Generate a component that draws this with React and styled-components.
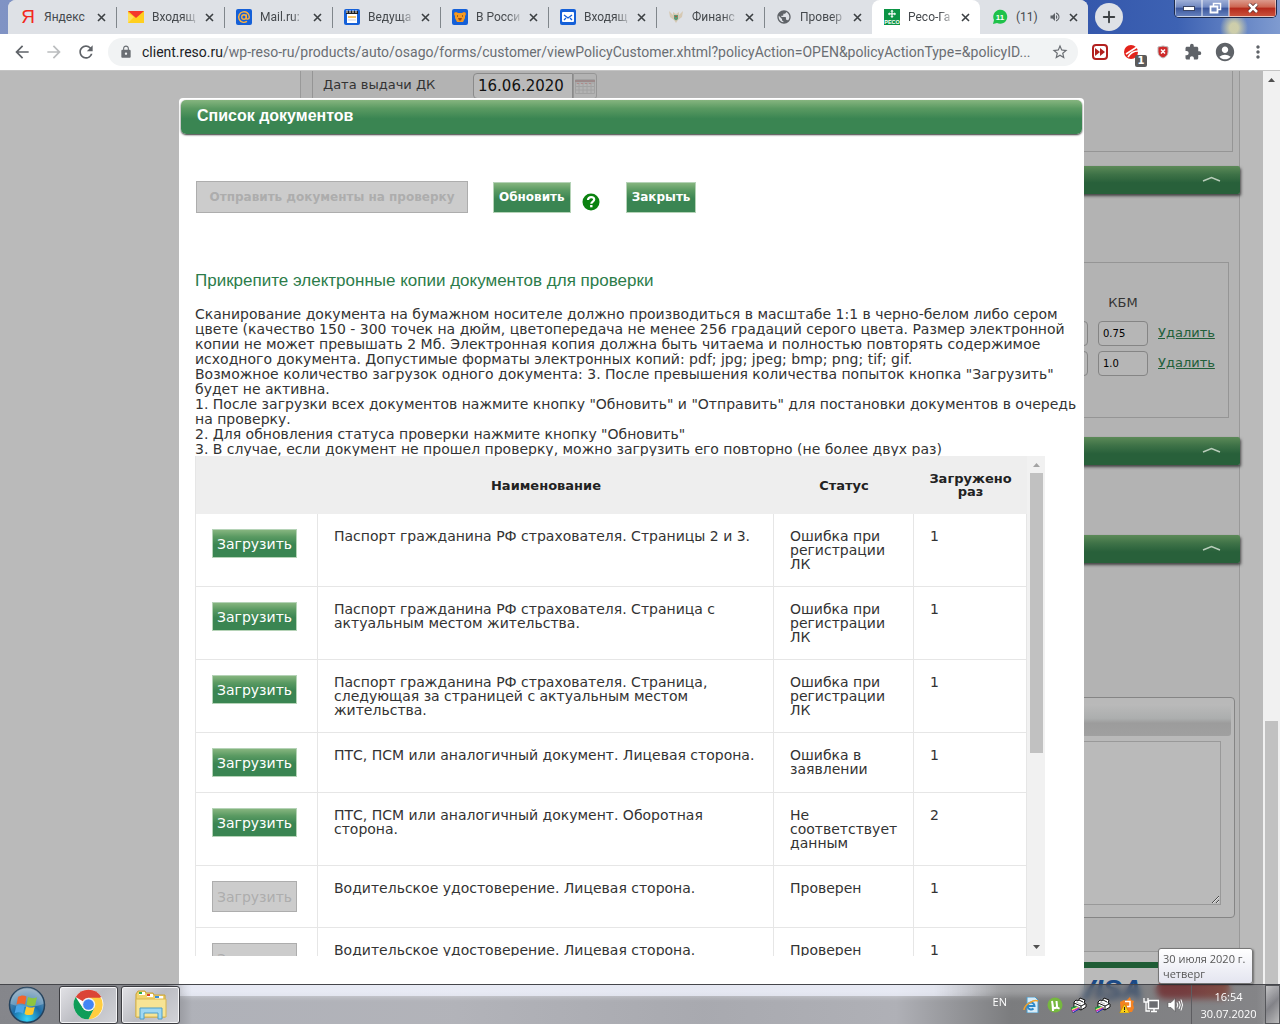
import React from 'react';
import styled, { createGlobalStyle, css } from 'styled-components';
import { FiPlus } from 'react-icons/fi';
import { MdArrowBack, MdArrowForward, MdRefresh, MdLock, MdStarBorder, MdExtension, MdAccountCircle, MdMoreVert, MdVolumeUp, MdPublic } from 'react-icons/md';

const GlobalStyle = createGlobalStyle`
  * {
    box-sizing: border-box;
  }

  body {
    margin: 0;
    overflow: hidden;
    font-family: 'DejaVu Sans', Verdana, sans-serif;
    font-size: 14px;
    color: #333;
  }

  button, input, textarea {
    font-family: inherit;
  }
`;

const chromeFont = css`
  font-family: Roboto, 'Open Sans', sans-serif;
`;

const greenFill = css`
  background: linear-gradient(to bottom, #86b57f 0%, #5a9a62 25%, #3a8552 55%, #3a8552 100%);
`;

const Screen = styled.div`
  display: grid;
  grid-template-rows: 34px 37px minmax(0, 1fr) 40px;
  grid-template-columns: minmax(0, 1fr);
  height: 100vh;
`;

/* ---------- browser ---------- */

const TabStrip = styled.div`
  ${chromeFont}
  display: flex;
  padding-left: 8px;
  background:
    radial-gradient(ellipse 14px 16px at 1234px 28px, rgba(217, 214, 168, 0.9) 30%, rgba(217, 214, 168, 0) 100%),
    linear-gradient(to right, #8093c4 0%, #5a75ba 50%, #3558ac 85%, #3d62b3 92%, #7f9bd0 100%);
`;

const Tabs = styled.div`
  display: flex;
  flex: 0 1 1080px;
  min-width: 0;
  background: #dee1e6;
  border-radius: 8px 8px 0 0;
`;

const Tab = styled.div`
  display: flex;
  align-items: center;
  flex: 0 1 108px;
  gap: 8px;
  min-width: 0;
  padding: 0 10px 0 11px;
  font-size: 12px;
  color: #45494d;
  background: ${props => (props.$active ? '#fff' : '#dee1e6')};
  border-left: 1px solid transparent;
  border-image: ${props => (props.$divider ? 'linear-gradient(transparent 8px, #80868b 8px, #80868b 27px, transparent 27px) 1' : 'none')};
  border-radius: ${props => (props.$divider ? '0' : '8px 8px 0 0')};
`;

const TabTitle = styled.span`
  flex: 1;
  min-width: 0;
  white-space: nowrap;
  mask-image: ${props => (props.$faded ? 'linear-gradient(to right, #000 70%, rgba(0, 0, 0, 0.15) 100%)' : 'none')};
`;

const Favicon = styled.svg`
  flex: none;
  width: 16px;
  height: 16px;
`;

const YandexLetter = styled.span`
  width: 16px;
  flex: none;
  text-align: center;
  font: 19px/16px 'Liberation Sans Narrow', 'Liberation Sans', sans-serif;
  color: #f2281c;
`;

const PlainButton = styled.button`
  display: flex;
  align-items: center;
  justify-content: center;
  flex: none;
  padding: 0;
  border: none;
  background: none;
  color: ${props => props.$color || '#5f6368'};
`;

const NewTab = styled(PlainButton)`
  width: 28px;
  height: 28px;
  margin: 3px 0 0 7px;
  border-radius: 50%;
  background: #dee1e6;
  color: #3c4043;
`;

const WindowButtons = styled.div`
  display: flex;
  align-self: flex-start;
  height: 18px;
  margin-left: auto;
  margin-right: 3px;
  border: 1px solid #1d2a4b;
  border-top: none;
  border-radius: 0 0 5px 5px;
  overflow: hidden;
`;

const WindowButton = styled.button`
  display: flex;
  align-items: center;
  justify-content: center;
  width: ${props => (props.$close ? '47px' : '27px')};
  padding: 0;
  border: 1px solid rgba(255, 255, 255, 0.45);
  border-top: none;
  background: ${props => (props.$close
    ? 'linear-gradient(to bottom, #dc9a8c 0%, #cc6450 45%, #b4291b 50%, #c9503a 100%)'
    : 'linear-gradient(to bottom, #9fb0d8 0%, #6f87c0 45%, #3a559b 50%, #6480bd 100%)')};
`;

const Toolbar = styled.div`
  display: flex;
  align-items: center;
  padding: 0 12px;
  background: #fff;
  border-bottom: 1px solid #c4c4c4;
`;

const NavButtons = styled.div`
  display: flex;
  gap: 12px;
  margin-right: 12px;
`;

const Omnibox = styled.div`
  ${chromeFont}
  display: flex;
  align-items: center;
  flex: 1;
  min-width: 0;
  gap: 9px;
  height: 28px;
  padding: 0 9px 0 11px;
  border-radius: 14px;
  background: #f1f3f4;
  font-size: 14px;
  color: #6a6e73;
`;

const Address = styled.span`
  flex: 1;
  min-width: 0;
  overflow: hidden;
  white-space: nowrap;

  b {
    font-weight: 400;
    color: #202124;
  }
`;

const Extensions = styled.div`
  display: flex;
  align-items: center;
  gap: 12px;
  margin-left: 12px;
`;

const BlockerButton = styled(PlainButton)`
  position: relative;

  span {
    position: absolute;
    right: -5px;
    bottom: -5px;
    width: 12px;
    height: 12px;
    border-radius: 2px;
    background: #5b5b5b;
    color: #fff;
    font: bold 10px/12px 'DejaVu Sans', sans-serif;
  }
`;

/* ---------- page under the dialog ---------- */

const Viewport = styled.div`
  position: relative;
  grid-row: 3 / 5;
  grid-column: 1;
  display: flex;
  min-height: 0;
  overflow: hidden;
  background: #bababa;
`;

const Page = styled.main`
  flex: 1;
  display: flex;
  flex-direction: column;
  min-width: 0;
  padding: 0 23px 0 300px;
`;

const Sheet = styled.div`
  padding-bottom: 33px;
  background: #b3b3b3;
  border: 1px solid #999;
  border-top: none;
`;

const OwnerPanel = styled.section`
  display: flex;
  align-items: flex-start;
  height: 81px;
  margin: 0 6px 14px 11px;
  padding: 2px 10px;
  border: 1px solid #959595;
  border-top: none;
  font-size: 13px;

  label {
    width: 150px;
    line-height: 24px;
  }
`;

const DateInput = styled.input`
  width: 100px;
  height: 26px;
  padding: 0 4px;
  border: 1px solid #8a8a8a;
  border-radius: 4px 0 0 4px;
  background: #bababa;
  font-size: 15px;
  color: #111;
`;

const CalendarButton = styled(PlainButton)`
  width: 24px;
  height: 26px;
  border: 1px solid #969696;
  border-radius: 0 3px 3px 0;
`;

const SectionBar = styled.button`
  display: flex;
  justify-content: flex-end;
  align-items: center;
  width: calc(100% + 2px);
  height: 28px;
  margin: 0 -1px ${props => props.$gap};
  padding: 0 19px 2px;
  border: none;
  border-radius: 2px;
  background: linear-gradient(to bottom, #5c8a58 0%, #3e7247 30%, #28603a 60%, #28603a 100%);
  box-shadow: 1px 2px 3px #444;
`;

const DriversPanel = styled.section`
  display: grid;
  grid-template-columns: 50px 50px 54px;
  grid-auto-rows: 24px;
  justify-content: end;
  align-content: start;
  gap: 6px 10px;
  height: 156px;
  margin: 68px 10px 19px 11px;
  padding: 28px 16px 0;
  border: 1px solid #959595;
  font-size: 13px;
  line-height: 24px;
`;

const ColumnName = styled.span`
  grid-column: 2;
  text-align: center;
`;

const SmallInput = styled.input`
  min-width: 0;
  height: 25px;
  padding: 0 4px;
  border: 1px solid #858585;
  border-radius: 4px;
  background: #b6b6b6;
  font-size: 10px;
  color: #000;
`;

const PageLink = styled.a`
  color: #22603a;
`;

const NotePanel = styled.section`
  height: 221px;
  margin: 0 4px 0 11px;
  padding: 6px 3px;
  border: 1px solid #858585;
  border-radius: 4px;
  background: #b9b9b9;
`;

const NoteTitle = styled.div`
  height: 32px;
  margin-bottom: 5px;
  border-radius: 3px;
  background: linear-gradient(to bottom, #bababa 0%, #acaeae 45%, #9c9c9c 60%, #a0a0a0 100%);
`;

const NoteArea = styled.textarea`
  display: block;
  width: calc(100% - 10px);
  height: 164px;
  border: 1px solid #999;
  background: #bababa;
`;

const PageFooter = styled.footer`
  display: flex;
  justify-content: flex-end;
  gap: 14px;
  margin-top: 10px;
  padding: 8px 10px 0;
  border-top: 6px solid #1f5c35;
  font: italic bold 28px/28px 'Liberation Sans', sans-serif;
  color: #1b4a86;
`;

const CardMark = styled.span`
  width: 74px;
  height: 18px;
  margin-top: 5px;
  border-radius: 9px;
  background: linear-gradient(to right, #a03030 40%, #b5543a);
`;

const ScrollTrack = styled.div`
  display: flex;
  flex: none;
  flex-direction: column;
  align-items: center;
  width: ${props => props.$width};
  background: #f1f1f1;
`;

const ScrollArrow = styled.svg`
  flex: none;
  width: 9px;
  height: 17px;
  transform: ${props => (props.$down ? 'rotate(180deg)' : 'none')};
`;

const ScrollThumb = styled.div`
  width: 13px;
  height: ${props => props.$height};
  margin-top: ${props => props.$top || 0};
  margin-bottom: auto;
  background: #c1c1c1;
`;

/* ---------- dialog ---------- */

const Overlay = styled.div`
  position: absolute;
  inset: 0 17px 28px 0;
  display: flex;
  justify-content: center;
  padding-top: 27px;
`;

const Dialog = styled.div`
  display: flex;
  flex-direction: column;
  width: 905px;
  max-width: 100%;
  padding: 2px;
  border-radius: 4px 4px 0 0;
  background: #fff;
`;

const DialogTitle = styled.h1`
  ${greenFill}
  flex: none;
  height: 34px;
  margin: 0;
  padding-left: 16px;
  border-radius: 5px;
  box-shadow: 0 1px 2px #333;
  font: bold 16px/32px 'Liberation Sans', Arial, sans-serif;
  color: #fff;
`;

const DialogBody = styled.div`
  padding: 47px 0 0 14px;
`;

const Actions = styled.div`
  display: flex;
  align-items: center;
  padding-left: 1px;
`;

const ActionButton = styled.button`
  ${greenFill}
  flex: none;
  height: 31px;
  padding: 0 5px;
  border: 1px solid #b5d3b7;
  font-size: 12px;
  font-weight: bold;
  color: #fff;

  &:disabled {
    height: 32px;
    border-color: #adadad;
    background: #ccc;
    color: #adadad;
  }
`;

const SendButton = styled(ActionButton)`
  width: 272px;
  margin-right: 25px;
`;

const HelpButton = styled(PlainButton)`
  margin: 9px 26px 0 11px;
`;

const Subtitle = styled.h2`
  margin: 58px 0 16px;
  font: 17px/20px 'Liberation Sans', Arial, sans-serif;
  color: #2c7c4a;
`;

const Rules = styled.div`
  height: 149px;
  overflow: hidden;
  line-height: 15px;

  p {
    margin: 0;
  }
`;

const TableFrame = styled.div`
  display: flex;
  width: 850px;
  max-width: 100%;
  height: 500px;
  overflow: hidden;
`;

const TableScroll = styled.div`
  flex: 1;
  min-width: 0;
  overflow: hidden;
`;

const Table = styled.table`
  width: 100%;
  table-layout: fixed;
  border-spacing: 0;
  border-left: 1px solid #e6e6e6;
  line-height: 14px;

  th {
    height: 58px;
    padding: 0 15px;
    background: #eee;
    font-size: 13px;
    line-height: 13px;
    color: #222;
  }

  td {
    padding: 15px 15px 15px 16px;
    border-right: 1px solid #e6e6e6;
    border-bottom: 1px solid #e6e6e6;
    vertical-align: top;
  }
`;

const UploadButton = styled(ActionButton)`
  display: block;
  height: 29px;
  padding: 0 4px;
  font-size: 14px;
  font-weight: normal;

  &:disabled {
    height: 31px;
  }
`;

/* ---------- taskbar ---------- */

const Taskbar = styled.footer`
  font-family: 'Open Sans', 'Noto Sans', sans-serif;
  grid-row: 4;
  grid-column: 1;
  z-index: 2;
  display: flex;
  align-items: center;
  min-width: 0;
  border-top: 1px solid #45464b;
  color: #fff;
  font-size: 11px;
  backdrop-filter: blur(3px);
  background:
    linear-gradient(to right, transparent 13%, rgba(240, 243, 255, 0.7) 15%, rgba(240, 243, 255, 0.7) 73%, transparent 78%) 0 0 / 100% 11px no-repeat,
    linear-gradient(to right, rgba(80, 82, 92, 0.5) 0%, rgba(80, 82, 92, 0.5) 13%, rgba(164, 168, 182, 0.5) 15%, rgba(170, 172, 184, 0.5) 35%, rgba(150, 152, 164, 0.5) 55%, rgba(164, 166, 178, 0.5) 70%, rgba(60, 62, 66, 0.5) 79%, rgba(80, 80, 86, 0.5) 100%);
`;

const StartButton = styled(PlainButton)`
  width: 59px;
  padding-right: 6px;
`;

const TaskButton = styled(PlainButton)`
  width: 59px;
  height: 38px;
  margin-right: 3px;
  border: 1px solid #3c3d42;
  border-radius: 3px;
  background: linear-gradient(135deg, #e2e2e6 0%, #bcbdc3 50%, #d2d3d8 100%);
  box-shadow: inset 0 0 0 1px #f4f4f6;
`;

const Tray = styled.div`
  display: flex;
  align-items: center;
  gap: 8px;
  height: 100%;
  margin-left: auto;
`;

const Language = styled.span`
  margin: -6px 8px 0 0;
`;

const Clock = styled.time`
  position: relative;
  width: 74px;
  height: 100%;
  padding-top: 3px;
  border-left: 1px solid #5d5d61;
  text-align: center;
  line-height: 17px;
`;

const ClockTip = styled.span`
  position: absolute;
  right: 12px;
  bottom: 40px;
  width: 95px;
  padding: 2px 4px;
  border: 1px solid #767676;
  border-radius: 3px;
  background: linear-gradient(to bottom, #fff, #e4e5f0);
  box-shadow: 1px 1px 2px rgba(0, 0, 0, 0.4);
  color: #575757;
  text-align: left;
  line-height: 15px;
  white-space: nowrap;
`;

const ShowDesktop = styled.button`
  width: 15px;
  height: 100%;
  padding: 0;
  border: 1px solid #55565a;
  background: linear-gradient(135deg, rgba(255, 255, 255, 0.5), rgba(120, 120, 130, 0.4) 50%, rgba(255, 255, 255, 0.4));
`;

const CloseIcon = () => (
  <svg width="9" height="9" viewBox="0 0 9 9">
    <path d="M1 1l7 7M8 1l-7 7" stroke="#3c4043" strokeWidth="1.6" />
  </svg>
);

const Chevron = () => (
  <svg width="19" height="6" viewBox="0 0 19 6">
    <path d="M1 5L9.500 1.500L18 5" fill="none" stroke="#b9cdbb" strokeWidth="1.5" />
  </svg>
);

const favicons = {
  yandex: <YandexLetter>Я</YandexLetter>,
  inbox: (
    <Favicon viewBox="0 0 16 16">
      <rect y="2" width="16" height="12" fill="#ffcf1f" />
      <path d="M0 2h16l-8 7z" fill="#f4382c" />
      <path d="M0 14V4l6 4z" fill="#ffe05c" />
    </Favicon>
  ),
  mail: (
    <Favicon viewBox="0 0 16 16">
      <rect width="16" height="16" rx="2" fill="#1560d8" />
      <circle cx="8" cy="8" r="2.300" fill="none" stroke="#ffb13b" strokeWidth="1.400" />
      <path d="M10.300 5.500v3.400c0 1.800 3 1.800 3-.9A5.300 5.300 0 1 0 11 12.400" fill="none" stroke="#ffb13b" strokeWidth="1.400" />
    </Favicon>
  ),
  calendar: (
    <Favicon viewBox="0 0 16 16">
      <rect width="16" height="16" rx="2" fill="#1560d8" />
      <path d="M3 5h10v9H3z" fill="#fff" />
      <path d="M2 2h12v3H2z" fill="#222" />
      <path d="M3 1v3M6 1v3M9 1v3M12 1v3" stroke="#eee" />
      <path d="M4 8h8" stroke="#f3b23a" strokeWidth="1.500" />
      <path d="M4 11h8" stroke="#c9d3e6" />
    </Favicon>
  ),
  bear: (
    <Favicon viewBox="0 0 16 16">
      <rect width="16" height="16" rx="2" fill="#1560d8" />
      <circle cx="4" cy="5" r="2" fill="#f08c1c" />
      <circle cx="12" cy="5" r="2" fill="#f08c1c" />
      <path d="M3 4h10v5l-2 4H5L3 9z" fill="#f59a23" />
      <path d="M6 9h4l-1 2.500H7z" fill="#a14b12" />
      <path d="M5 7h1M10 7h1" stroke="#5a2a0a" />
    </Favicon>
  ),
  envelope: (
    <Favicon viewBox="0 0 16 16">
      <rect width="16" height="16" rx="2" fill="#1560d8" />
      <rect x="2" y="3" width="12" height="10" rx="1" fill="#fff" />
      <path d="M4 6l4 3 4-3M4 11l2-2M12 11l-2-2" fill="none" stroke="#1560d8" strokeWidth="1.300" />
    </Favicon>
  ),
  eagle: (
    <Favicon viewBox="0 0 16 16">
      <path d="M1 2l4 4V3l3 2 3-2v3l4-4-1 6-4 3-2 3-2-3-4-3z" fill="#d6c9b4" />
      <path d="M6 6h4v4l-2 1.500L6 10z" fill="#5c9a76" />
      <path d="M7 7.500h2" stroke="#b9503c" />
    </Favicon>
  ),
  globe: <MdPublic size={16} color="#5f6368" />,
  reso: (
    <Favicon viewBox="0 0 16 16">
      <rect width="16" height="16" fill="#0b9444" />
      <path d="M8 .8l1.700 1.700H6.300zM8 9L6.300 7.300h3.400zM3.900 4.900l1.700-1.700v3.400zM12.100 4.900l-1.700-1.700v3.400z" fill="#fff" />
      <path d="M8 2v6M5 4.900h6" stroke="#fff" strokeWidth="1.200" />
      <text x="8" y="15" textAnchor="middle" fontFamily="Liberation Sans" fontWeight="bold" fontSize="5.500" fill="#fff">РЕСО</text>
    </Favicon>
  ),
  whatsapp: (
    <Favicon viewBox="0 0 16 16">
      <path d="M1 15l1-4a7 7 0 1 1 3 3z" fill="#1fc24a" />
      <text x="8" y="11" textAnchor="middle" fontFamily="Liberation Sans" fontWeight="bold" fontSize="8" fill="#fff">11</text>
    </Favicon>
  ),
};

const tabs = [
  { icon: 'yandex', title: 'Яндекс' },
  { icon: 'inbox', title: 'Входящ', divider: true, faded: true },
  { icon: 'mail', title: 'Mail.ru:', divider: true, faded: true },
  { icon: 'calendar', title: 'Ведуща', divider: true, faded: true },
  { icon: 'bear', title: 'В Росси', divider: true, faded: true },
  { icon: 'envelope', title: 'Входящ', divider: true, faded: true },
  { icon: 'eagle', title: 'Финанс', divider: true, faded: true },
  { icon: 'globe', title: 'Провер', divider: true, faded: true },
  { icon: 'reso', title: 'Ресо-Га', active: true, faded: true },
  { icon: 'whatsapp', title: '(11)', sound: true },
];

const documents = [
  { name: 'Паспорт гражданина РФ страхователя. Страницы 2 и 3.', status: 'Ошибка при регистрации ЛК', count: 1 },
  { name: 'Паспорт гражданина РФ страхователя. Страница с актуальным местом жительства.', status: 'Ошибка при регистрации ЛК', count: 1 },
  { name: 'Паспорт гражданина РФ страхователя. Страница, следующая за страницей с актуальным местом жительства.', status: 'Ошибка при регистрации ЛК', count: 1 },
  { name: 'ПТС, ПСМ или аналогичный документ. Лицевая сторона.', status: 'Ошибка в заявлении', count: 1 },
  { name: 'ПТС, ПСМ или аналогичный документ. Оборотная сторона.', status: 'Не соответствует данным', count: 2 },
  { name: 'Водительское удостоверение. Лицевая сторона.', status: 'Проверен', count: 1, done: true },
  { name: 'Водительское удостоверение. Лицевая сторона.', status: 'Проверен', count: 1, done: true },
];

const Browser = () => (
  <>
    <TabStrip>
      <Tabs>
        {tabs.map((tab, i) => (
          <Tab key={i} $active={tab.active} $divider={tab.divider}>
            {favicons[tab.icon]}
            <TabTitle $faded={tab.faded}>{tab.title}</TabTitle>
            {tab.sound && <MdVolumeUp size={12} color="#5f6368" />}
            <PlainButton aria-label="Закрыть вкладку"><CloseIcon /></PlainButton>
          </Tab>
        ))}
      </Tabs>
      <NewTab aria-label="Новая вкладка"><FiPlus size={18} strokeWidth={2.5} /></NewTab>
      <WindowButtons>
        <WindowButton aria-label="Свернуть">
          <svg width="12" height="5"><rect x="0.500" y="0.500" width="11" height="4" fill="#fff" stroke="#3b4666" /></svg>
        </WindowButton>
        <WindowButton aria-label="Восстановить">
          <svg width="13" height="12" viewBox="0 0 13 12">
            <path d="M4.500 1.500h7v6h-7z" fill="none" stroke="#fff" strokeWidth="1.500" />
            <path d="M1.500 4.500h7v6h-7z" fill="#7088bf" stroke="#fff" strokeWidth="1.800" />
          </svg>
        </WindowButton>
        <WindowButton $close aria-label="Закрыть">
          <svg width="12" height="10" viewBox="0 0 12 10">
            <path d="M2 1l8 8M10 1l-8 8" stroke="#5a2a2a" strokeWidth="4" />
            <path d="M2 1l8 8M10 1l-8 8" stroke="#fff" strokeWidth="2.500" />
          </svg>
        </WindowButton>
      </WindowButtons>
    </TabStrip>
    <Toolbar>
      <NavButtons>
        <PlainButton aria-label="Назад"><MdArrowBack size={20} /></PlainButton>
        <PlainButton aria-label="Вперёд" $color="#bbbdbf"><MdArrowForward size={20} /></PlainButton>
        <PlainButton aria-label="Обновить страницу"><MdRefresh size={20} /></PlainButton>
      </NavButtons>
      <Omnibox>
        <MdLock size={14} />
        <Address>
          <b>client.reso.ru</b>/wp-reso-ru/products/auto/osago/forms/customer/viewPolicyCustomer.xhtml?policyAction=OPEN&amp;policyActionType=&amp;policyID...
        </Address>
        <MdStarBorder size={18} />
      </Omnibox>
      <Extensions>
        <PlainButton aria-label="Перемотка">
          <svg width="20" height="20" viewBox="0 0 20 20">
            <rect x="3" y="3" width="14" height="14" rx="3" fill="#fff" stroke="#b3211f" strokeWidth="2" />
            <path d="M5 6l5 4-5 4zM10 6l5 4-5 4z" fill="#b3211f" />
          </svg>
        </PlainButton>
        <BlockerButton aria-label="Блокировщик">
          <svg width="20" height="20" viewBox="0 0 20 20">
            <circle cx="9" cy="10" r="7" fill="#e3231b" />
            <path d="M4 12L15 5M6 15c3-5 6-6 10-6" stroke="#fff" strokeWidth="1.600" fill="none" />
          </svg>
          <span>1</span>
        </BlockerButton>
        <PlainButton aria-label="Защита">
          <svg width="18" height="20" viewBox="0 0 18 20">
            <path d="M4 5l5-1 5 1v5c0 3-2 5-5 6-3-1-5-3-5-6z" fill="#cf2a2a" stroke="#b9b9b9" />
            <path d="M7 7.500l4 4M11 7.500l-4 4" stroke="#fff" strokeWidth="1.500" />
          </svg>
        </PlainButton>
        <PlainButton aria-label="Расширения"><MdExtension size={18} /></PlainButton>
        <PlainButton aria-label="Профиль"><MdAccountCircle size={22} /></PlainButton>
        <PlainButton aria-label="Меню"><MdMoreVert size={20} /></PlainButton>
      </Extensions>
    </Toolbar>
  </>
);

const PolicyPage = () => (
  <Page>
    <Sheet>
      <OwnerPanel>
        <label htmlFor="dk-date">Дата выдачи ДК</label>
        <DateInput id="dk-date" defaultValue="16.06.2020" />
        <CalendarButton aria-label="Календарь">
          <svg width="20" height="18" viewBox="0 0 20 18">
            <path d="M0.500 2.500h19v14h-19zM0 6h20M0 9.500h20M0 13h20M4 6v10M8 6v10M12 6v10M16 6v10" fill="none" stroke="#a2a2a2" />
            <path d="M0 4h20" stroke="#9c8a8a" strokeWidth="2" />
            <path d="M2 6.500h16" stroke="#b08a8a" strokeDasharray="2 2" />
          </svg>
        </CalendarButton>
      </OwnerPanel>
      <SectionBar $gap="0" aria-label="Свернуть раздел"><Chevron /></SectionBar>
      <DriversPanel>
        <ColumnName>КБМ</ColumnName>
        <span />
        <SmallInput aria-label="Стаж" />
        <SmallInput aria-label="КБМ" defaultValue="0.75" />
        <PageLink href="#delete-1">Удалить</PageLink>
        <SmallInput aria-label="Стаж" />
        <SmallInput aria-label="КБМ" defaultValue="1.0" />
        <PageLink href="#delete-2">Удалить</PageLink>
      </DriversPanel>
      <SectionBar $gap="70px" aria-label="Свернуть раздел"><Chevron /></SectionBar>
      <SectionBar $gap="134px" aria-label="Свернуть раздел"><Chevron /></SectionBar>
      <NotePanel>
        <NoteTitle />
        <NoteArea aria-label="Примечание" />
      </NotePanel>
    </Sheet>
    <PageFooter>
      VISA
      <CardMark />
    </PageFooter>
  </Page>
);

const Arrow = ({ down, color = '#505050' }) => (
  <ScrollArrow $down={down} viewBox="0 0 9 17">
    <path d="M1 11l3.500-4L8 11z" fill={color} />
  </ScrollArrow>
);

const DocumentsDialog = () => (
  <Overlay>
    <Dialog role="dialog" aria-labelledby="docs-title">
      <DialogTitle id="docs-title">Список документов</DialogTitle>
      <DialogBody>
        <Actions>
          <SendButton disabled>Отправить документы на проверку</SendButton>
          <ActionButton>Обновить</ActionButton>
          <HelpButton aria-label="Справка">
            <svg width="18" height="18" viewBox="0 0 18 18">
              <circle cx="9" cy="9" r="8.500" fill="#0b8210" />
              <path d="M6 7c0-4 6.200-3.600 6.200-.4 0 2-2.900 2-2.900 4.200" fill="none" stroke="#fff" strokeWidth="2.200" />
              <rect x="8.100" y="12" width="2.400" height="2.300" fill="#fff" />
            </svg>
          </HelpButton>
          <ActionButton>Закрыть</ActionButton>
        </Actions>
        <Subtitle>Прикрепите электронные копии документов для проверки</Subtitle>
        <Rules>
          <p>Сканирование документа на бумажном носителе должно производиться в масштабе 1:1 в черно-белом либо сером цвете (качество 150 - 300 точек на дюйм, цветопередача не менее 256 градаций серого цвета. Размер электронной копии не может превышать 2 Мб. Электронная копия должна быть читаема и полностью повторять содержимое исходного документа. Допустимые форматы электронных копий: pdf; jpg; jpeg; bmp; png; tif; gif.</p>
          <p>Возможное количество загрузок одного документа: 3. После превышения количества попыток кнопка "Загрузить" будет не активна.</p>
          <p>1. После загрузки всех документов нажмите кнопку "Обновить" и "Отправить" для постановки документов в очередь на проверку.</p>
          <p>2. Для обновления статуса проверки нажмите кнопку "Обновить"</p>
          <p>3. В случае, если документ не прошел проверку, можно загрузить его повторно (не более двух раз)</p>
        </Rules>
        <TableFrame>
          <TableScroll>
            <Table>
              <colgroup>
                <col style={{ width: 122 }} />
                <col />
                <col style={{ width: 140 }} />
                <col style={{ width: 113 }} />
              </colgroup>
              <thead>
                <tr>
                  <th aria-label="Действие" />
                  <th>Наименование</th>
                  <th>Статус</th>
                  <th>Загружено раз</th>
                </tr>
              </thead>
              <tbody>
                {documents.map((doc, i) => (
                  <tr key={i}>
                    <td><UploadButton disabled={doc.done}>Загрузить</UploadButton></td>
                    <td>{doc.name}</td>
                    <td>{doc.status}</td>
                    <td>{doc.count}</td>
                  </tr>
                ))}
              </tbody>
            </Table>
          </TableScroll>
          <ScrollTrack $width="18px">
            <Arrow color="#a3a3a3" />
            <ScrollThumb $height="280px" />
            <Arrow down />
          </ScrollTrack>
        </TableFrame>
      </DialogBody>
    </Dialog>
  </Overlay>
);

const WindowsOrb = () => (
  <svg width="38" height="38" viewBox="0 0 38 38">
    <defs>
      <radialGradient id="orb" cx="50%" cy="90%" r="85%">
        <stop offset="0" stopColor="#35d4f7" />
        <stop offset="0.500" stopColor="#1a6da8" />
        <stop offset="1" stopColor="#7d9cb5" />
      </radialGradient>
    </defs>
    <circle cx="19" cy="19" r="17.500" fill="url(#orb)" stroke="#25435e" strokeWidth="1.500" />
    <path d="M2.500 18a16.500 16.500 0 0 1 33 0c-10 4-23 4-33 0z" fill="#fff" opacity="0.250" />
    <path d="M10 11c3-2 6-2 8.500-.5l-1.500 8c-3-1.500-5.500-1.500-8.500 0z" fill="#f0642c" />
    <path d="M20 11c3 1.500 6 1.500 9 .2l-1.800 8c-3 1.300-5.700 1-8.700-.4z" fill="#8ec63f" />
    <path d="M8.200 20c3-1.500 5.500-1.500 8.500 0l-1.700 7.500c-3-1.500-5.500-1.500-8.300-.2z" fill="#4aa5e8" />
    <path d="M18.200 20.500c3 1.400 5.600 1.400 8.600.2l-1.800 7.500c-3 1.200-5.600 1.200-8.500-.3z" fill="#fdc92e" />
  </svg>
);

const ChromeLogo = () => (
  <svg width="31" height="31" viewBox="0 0 48 48">
    <circle cx="24" cy="24" r="23" fill="#fff" />
    <path d="M24 24L4.080 12.500A23 23 0 0 1 43.920 12.500z" fill="#db4437" />
    <path d="M24 13.500h19.400A23 23 0 0 1 24 47l9.100-17.800z" fill="#ffcd40" />
    <path d="M14.900 29.200L4.080 12.500A23 23 0 0 0 24 47l9.100-17.800z" fill="#0f9d58" />
    <circle cx="24" cy="24" r="10.500" fill="#f1f1f1" />
    <circle cx="24" cy="24" r="8.300" fill="#4285f4" />
  </svg>
);

const ExplorerLogo = () => (
  <svg width="32" height="30" viewBox="0 0 32 30">
    <path d="M1 4l2-3h7l1 2h7l1 2h11v22H1z" fill="#f1d36d" stroke="#c9a238" />
    <path d="M4 2h6v3H4z" fill="#fff" /><path d="M4 2h3v2H4z" fill="#2fae4a" />
    <path d="M12 4h6v3h-6z" fill="#fff" /><path d="M12 4h3v2h-3z" fill="#d8432c" />
    <path d="M20 6h8v3h-8z" fill="#fff" /><path d="M20 6h4v2h-4z" fill="#3a8ed8" />
    <path d="M1 9h30v18H1z" fill="#f7e495" stroke="#d8b650" />
    <path d="M5 29V18h22v11h-4v-6H9v6z" fill="#9fd8f2" stroke="#4d9fca" />
  </svg>
);

const Printer = () => (
  <svg width="16" height="16" viewBox="0 0 16 16">
    <path d="M3 5l2-2 2 1 2-3 5 2-1 3 2 1v3l-5 3-7-3z" fill="#fff" stroke="#111" />
    <path d="M3 6l7 3 4-2M10 9v4M8 3l4 2" fill="none" stroke="#111" />
    <path d="M5 5l5 2" stroke="#b5b5b5" />
    <path d="M0 11l5-2 4 2-7 5z" fill="#fff" stroke="#111" strokeWidth="0.500" />
    <path d="M0 11.500l5.500-2" stroke="#1a9b3a" strokeWidth="1.500" />
    <path d="M1 13l6-2.500" stroke="#e8e337" strokeWidth="1.300" />
    <path d="M1 14.200l7-3" stroke="#c428b4" strokeWidth="1.300" />
    <path d="M2 15.500l6-3.500" stroke="#2132c4" />
  </svg>
);

const WindowsTaskbar = () => (
  <Taskbar>
    <StartButton aria-label="Пуск"><WindowsOrb /></StartButton>
    <TaskButton aria-label="Chrome"><ChromeLogo /></TaskButton>
    <TaskButton aria-label="Проводник"><ExplorerLogo /></TaskButton>
    <Tray>
      <Language>EN</Language>
      <svg width="16" height="16" viewBox="0 0 16 16">
        <path d="M4 0h8l3 3v13H4z" fill="#d7ecf8" stroke="#4a9ccc" />
        <path d="M5 9h6.500a3.500 3.500 0 1 0-1 2.500" fill="none" stroke="#2d88c8" strokeWidth="2" />
        <path d="M1 13C1 8 11 2 15 4" fill="none" stroke="#f2a32a" strokeWidth="1.500" />
      </svg>
      <svg width="16" height="16" viewBox="0 0 16 16">
        <circle cx="8" cy="8" r="7.500" fill="#76b83f" />
        <path d="M5 4l1 6c1 2 4 1 4-1L9.500 4M10 9c0 2 1 2.500 2.500 2M5.500 7l.5 7" fill="none" stroke="#fff" strokeWidth="2" />
      </svg>
      <Printer />
      <Printer />
      <svg width="16" height="16" viewBox="0 0 16 16">
        <path d="M1 5l4-2 2 1 4-4 1 3 3 1-1 3 1 4-2 4H2z" fill="#f58220" />
        <path d="M6 4.500h5v5H8" fill="none" stroke="#fff" strokeWidth="1.500" />
        <path d="M5.500 7l5 9H.5z" fill="#fcd116" stroke="#a8790a" strokeWidth="0.500" />
        <path d="M5.500 10v3M5.500 14v1" stroke="#222" />
      </svg>
      <svg width="16" height="16" viewBox="0 0 16 16">
        <path d="M5.500 3.500h10v8h-10zM8 14.500h6M11 12v2" fill="#6b6c70" stroke="#fff" strokeWidth="1.500" />
        <path d="M1 1v4h4V1M3 5v9h4" fill="none" stroke="#fff" strokeWidth="1.300" />
      </svg>
      <svg width="16" height="16" viewBox="0 0 16 16">
        <path d="M1 5.500h3l4-4v13l-4-4H1z" fill="#fff" stroke="#444" strokeWidth="0.500" />
        <path d="M10 5.500q1.500 2.500 0 5M12 4q2.500 4 0 8M14 2.500q3 5.500 0 11" fill="none" stroke="#fff" />
      </svg>
      <Clock>
        <ClockTip>30 июля 2020 г.<br />четверг</ClockTip>
        16:54<br />30.07.2020
      </Clock>
    </Tray>
    <ShowDesktop aria-label="Показать рабочий стол" />
  </Taskbar>
);

const App = () => (
  <Screen>
    <GlobalStyle />
    <Browser />
    <Viewport>
      <PolicyPage />
      <ScrollTrack $width="17px">
        <Arrow />
        <ScrollThumb $top="633px" $height="320px" />
      </ScrollTrack>
      <DocumentsDialog />
    </Viewport>
    <WindowsTaskbar />
  </Screen>
);

export default App;
